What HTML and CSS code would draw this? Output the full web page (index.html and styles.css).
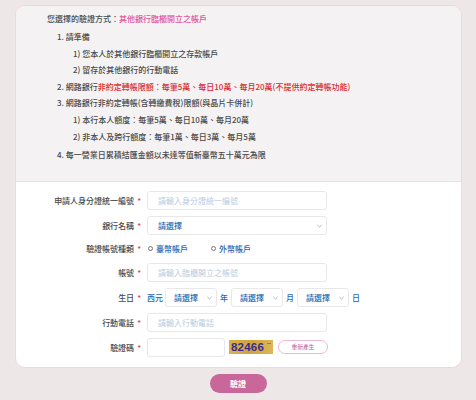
FILE: index.html
```html
<!DOCTYPE html>
<html lang="zh-Hant">
<head>
<meta charset="utf-8">
<link rel="stylesheet" href="styles.css">
</head>
<body>
<div class="card">
  <section class="info">
    <p class="head">您選擇的驗證方式：<span class="pink">其他銀行臨櫃開立之帳戶</span></p>
    <p class="l1 first">1. 請準備</p>
    <p class="l2">1) 您本人於其他銀行臨櫃開立之存款帳戶</p>
    <p class="l2">2) 留存於其他銀行的行動電話</p>
    <p class="l1">2. 網路銀行<span class="red">非約定轉帳限額：每筆5萬、每日10萬、每月20萬(不提供約定轉帳功能)</span></p>
    <p class="l1">3. 網路銀行非約定轉帳(含轉繳費稅)限額(與晶片卡併計)</p>
    <p class="l2">1) 本行本人額度：每筆5萬、每日10萬、每月20萬</p>
    <p class="l2">2) 非本人及跨行額度：每筆1萬、每日3萬、每月5萬</p>
    <p class="l1 last">4. 每一營業日累積結匯金額以未達等值新臺幣五十萬元為限</p>
  </section>
  <section class="form">
    <div class="row">
      <div class="label">申請人身分證統一編號<span class="star">*</span></div>
      <div class="input"><span class="ph">請輸入身分證統一編號</span></div>
    </div>
    <div class="row">
      <div class="label">銀行名稱<span class="star">*</span></div>
      <div class="select wide"><span>請選擇</span><svg class="chev" viewBox="0 0 6 4"><path d="M0.5 0.8 L3 3.2 L5.5 0.8" /></svg></div>
    </div>
    <div class="row radio-row">
      <div class="label">驗證帳號種類<span class="star">*</span></div>
      <div class="radios">
        <span class="radio"><span class="dot"></span>臺幣帳戶</span>
        <span class="radio"><span class="dot"></span>外幣帳戶</span>
      </div>
    </div>
    <div class="row">
      <div class="label">帳號<span class="star">*</span></div>
      <div class="input"><span class="ph">請輸入臨櫃開立之帳號</span></div>
    </div>
    <div class="row">
      <div class="label">生日<span class="star">*</span></div>
      <div class="birth">
        <span class="unit">西元</span>
        <div class="select small"><span>請選擇</span><svg class="chev" viewBox="0 0 6 4"><path d="M0.5 0.8 L3 3.2 L5.5 0.8" /></svg></div>
        <span class="unit">年</span>
        <div class="select small"><span>請選擇</span><svg class="chev" viewBox="0 0 6 4"><path d="M0.5 0.8 L3 3.2 L5.5 0.8" /></svg></div>
        <span class="unit">月</span>
        <div class="select small"><span>請選擇</span><svg class="chev" viewBox="0 0 6 4"><path d="M0.5 0.8 L3 3.2 L5.5 0.8" /></svg></div>
        <span class="unit">日</span>
      </div>
    </div>
    <div class="row">
      <div class="label">行動電話<span class="star">*</span></div>
      <div class="input"><span class="ph">請輸入行動電話</span></div>
    </div>
    <div class="row">
      <div class="label">驗證碼<span class="star">*</span></div>
      <div class="captcha-row">
        <div class="input short"></div>
        <div class="captcha"><span>82466</span><i class="mark"></i></div>
        <button class="regen">重新產生</button>
      </div>
    </div>
  </section>
</div>
<div class="actions"><button class="submit">驗證</button></div>
</body>
</html>
```
FILE: styles.css
```css
* { box-sizing: border-box; }
html, body { margin: 0; padding: 0; }
body {
  background: #ede8e7;
  font-family: "Noto Sans CJK TC", "Noto Sans", "Liberation Sans", sans-serif;
  font-size: 8px;
  color: #4a4a4a;
  width: 476px;
  height: 400px;
  padding: 5px 14px 0 15px;
}
.card {
  border: 1px solid #f1d7d7;
  border-radius: 10px;
  overflow: hidden;
  background: #fff;
}
.info {
  background: #f4f2f2;
  padding: 5px 0 17px 31px;
  border-bottom: 1px solid #f3dede;
}
.info p {
  margin: 0;
  line-height: 16.6px;
  font-weight: 500;
  white-space: nowrap;
}
.info .head { line-height: 16px; }
.info .first { margin-top: 2px; }
.info .last { margin-top: 2px; }
.info .l1 { padding-left: 10px; }
.info .l2 { padding-left: 26px; }
.pink { color: #e0569e; }
.red { color: #d92b2f; }

.form { padding: 9px 0 10px; }
.row {
  display: flex;
  align-items: center;
  height: 19px;
  margin-bottom: 6px;
}
.row:last-child { margin-bottom: 0; }
.row.radio-row { height: 16px; }
.label {
  width: 125px;
  flex: none;
  text-align: right;
  font-weight: 500;
  color: #4a4a4a;
}
.star {
  color: #e03a44;
  margin-left: 3px;
}
.label + * { margin-left: 6px; }
.input {
  width: 180px;
  height: 19px;
  border: 1px solid #e8e8e8;
  border-radius: 3px;
  background: #fff;
  display: flex;
  align-items: center;
  padding-left: 10px;
}
.input.short { width: 78px; }
.ph { color: #b9cbe0; }
.select {
  height: 19px;
  border: 1px solid #e8e8e8;
  border-radius: 3px;
  background: #fff;
  display: flex;
  align-items: center;
  color: #2c68b3;
  font-weight: 500;
  position: relative;
}
.select.wide { width: 180px; padding-left: 10px; }
.select.small { width: 52px; justify-content: center; padding-right: 12px; padding-left: 2px; }
.chev {
  position: absolute;
  right: 4px;
  top: 7px;
  width: 5px;
  height: 4px;
  fill: none;
  stroke: #6f8fbf;
  stroke-width: 0.8;
}
.radios { display: flex; align-items: center; color: #2c68b3; font-weight: 500; }
.radio { display: flex; align-items: center; margin-right: 22px; }
.dot {
  width: 5px;
  height: 5px;
  border: 0.8px solid #777;
  border-radius: 50%;
  margin-right: 3px;
  margin-left: 1px;
}
.birth { display: flex; align-items: center; gap: 3px; }
.unit { color: #2c68b3; font-weight: 500; }
.birth .unit:first-child { margin-right: -1px; }
.captcha-row { display: flex; align-items: center; }
.captcha {
  margin-left: 4px;
  width: 44px;
  height: 14px;
  background: linear-gradient(90deg, #d9b04a, #cfa440 50%, #dcb658);
  position: relative;
  display: flex;
  align-items: center;
  padding-left: 2px;
  font-family: "Liberation Sans", sans-serif;
  font-weight: bold;
  font-size: 11.5px;
  color: #3b2d8c;
  letter-spacing: 0.2px;
}
.captcha .mark {
  position: absolute;
  right: 2px;
  top: 3px;
  width: 4px;
  height: 1px;
  background: #c75a8e;
}
.regen {
  margin-left: 5px;
  width: 50px;
  height: 14px;
  border: 1px solid #f0b9d1;
  border-radius: 8px;
  background: #fff;
  color: #c2588f;
  font-family: inherit;
  font-size: 5.8px;
  padding: 0;
  line-height: 12px;
}
.actions {
  display: flex;
  justify-content: center;
  margin-top: 6px;
  padding-right: 1px;
}
.submit {
  width: 57px;
  height: 19px;
  border: none;
  border-radius: 10px;
  background: #c9679b;
  color: #fff;
  font-family: inherit;
  font-size: 8px;
  font-weight: 700;
  padding: 0;
}
```
